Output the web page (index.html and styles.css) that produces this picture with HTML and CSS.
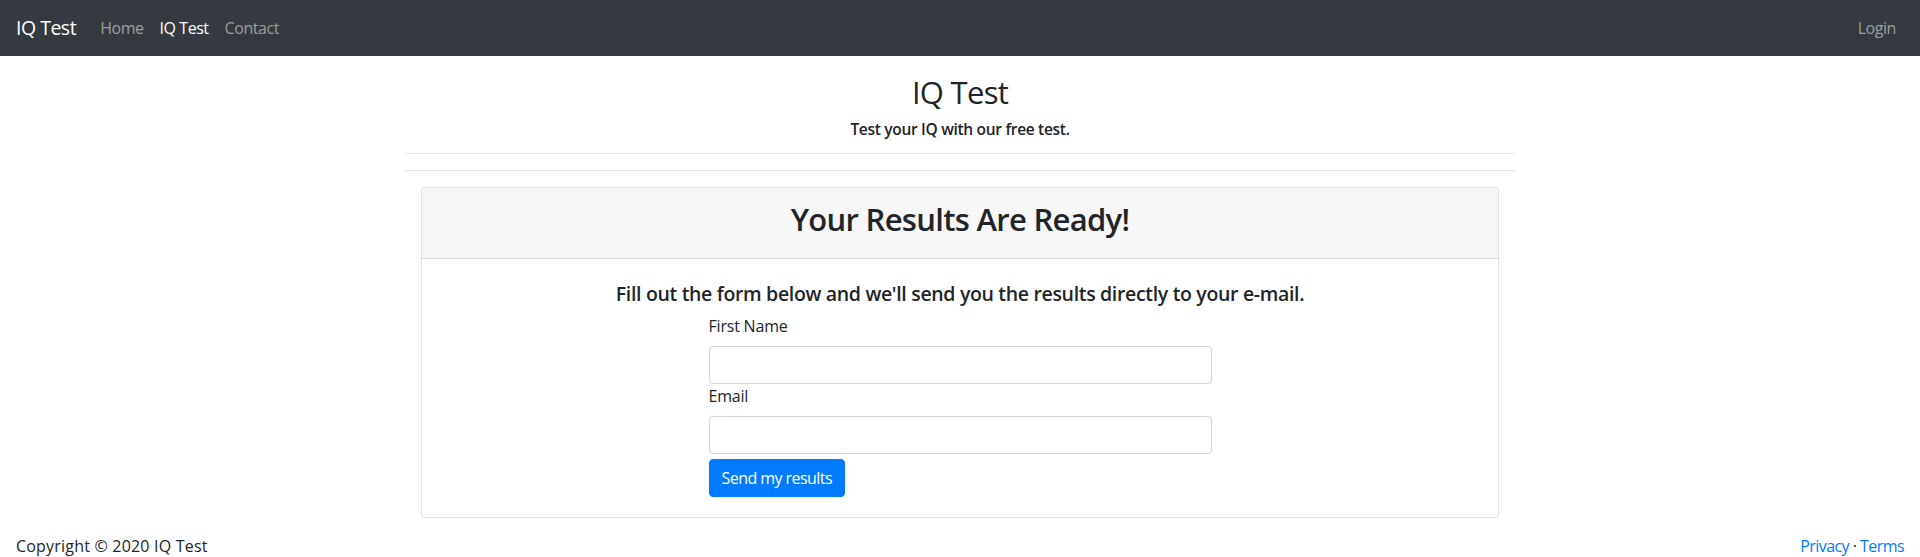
FILE: index.html
```html
<!DOCTYPE html>
<html lang="en">
<head>
<meta charset="utf-8">
<title>IQ Test</title>
<link rel="stylesheet" href="styles.css">
</head>
<body>
<nav class="navbar">
  <a class="brand" href="#">IQ Test</a>
  <ul class="nav-links">
    <li><a class="nav-link" href="#">Home</a></li>
    <li><a class="nav-link active" href="#">IQ Test</a></li>
    <li><a class="nav-link" href="#">Contact</a></li>
  </ul>
  <ul class="nav-links nav-right">
    <li><a class="nav-link" href="#">Login</a></li>
  </ul>
</nav>
<main class="container">
  <header class="page-header">
    <h1 class="page-title">IQ Test</h1>
    <p class="page-subtitle">Test your IQ with our free test.</p>
  </header>
  <hr class="divider">
  <section class="card">
    <div class="card-header">
      <h2 class="card-title">Your Results Are Ready!</h2>
    </div>
    <div class="card-body">
      <h5 class="card-lead">Fill out the form below and we'll send you the results directly to your e-mail.</h5>
      <form class="results-form">
        <label class="form-label" for="firstName">First Name</label>
        <input class="form-control" id="firstName" type="text">
        <label class="form-label" for="email">Email</label>
        <input class="form-control" id="email" type="email">
        <button class="btn-primary" type="button">Send my results</button>
      </form>
    </div>
  </section>
</main>
<footer class="footer">
  <span class="copyright">Copyright © 2020 IQ Test</span>
  <span class="footer-links"><a href="#">Privacy</a> · <a href="#">Terms</a></span>
</footer>
</body>
</html>
```

FILE: styles.css
```css
* { box-sizing: border-box; }
html, body { margin: 0; padding: 0; }
body {
  font-family: "Open Sans", "Noto Sans", sans-serif;
  font-size: 16px;
  line-height: 24px;
  color: #212529;
  background: #fff;
}
a { text-decoration: none; }

.navbar {
  height: 56px;
  background: #343a40;
  display: flex;
  align-items: center;
  padding: 8px 16px;
}
.brand {
  color: #fff;
  font-size: 19.5px;
  letter-spacing: -0.5px;
  line-height: 30px;
  padding: 5px 0;
  margin-right: 16px;
}
.nav-links {
  list-style: none;
  margin: 0;
  padding: 0;
  display: flex;
}
.nav-right { margin-left: auto; }
.nav-link {
  display: block;
  padding: 8px;
  color: rgba(255, 255, 255, 0.5);
  letter-spacing: -0.45px;
}
.nav-link.active { color: #fff; }

.container {
  width: 1110px;
  margin: 0 auto;
}
.page-header {
  text-align: center;
  padding: 17px 0 12px;
  border-bottom: 1px solid rgba(0, 0, 0, 0.1);
}
.page-title {
  margin: 0;
  font-size: 31px;
  letter-spacing: -0.7px;
  line-height: 38px;
  font-weight: 400;
}
.page-subtitle {
  margin: 6px 0 0;
  font-size: 15.5px;
  letter-spacing: -0.3px;
  font-weight: 600;
}
.divider {
  margin: 16px 0;
  border: 0;
  border-top: 1px solid rgba(0, 0, 0, 0.1);
}

.card {
  margin: 0 16px;
  border: 1px solid rgba(0, 0, 0, 0.125);
  border-radius: 4px;
  overflow: hidden;
}
.card-header {
  background: rgba(0, 0, 0, 0.03);
  border-bottom: 1px solid rgba(0, 0, 0, 0.125);
  padding: 12px 20px 20px;
  text-align: center;
}
.card-title {
  margin: 0;
  font-size: 31px;
  letter-spacing: -0.7px;
  line-height: 38px;
  font-weight: 600;
}
.card-body {
  padding: 23px 20px 20px;
}
.card-lead {
  margin: 0 0 8px;
  text-align: center;
  font-size: 19.5px;
  letter-spacing: -0.33px;
  line-height: 24px;
  font-weight: 600;
}
.results-form {
  width: 503px;
  margin: 0 auto;
  display: flex;
  flex-direction: column;
  align-items: flex-start;
}
.form-label {
  display: block;
  margin-bottom: 8px;
  letter-spacing: -0.2px;
}
.form-control {
  width: 100%;
  height: 38px;
  border: 1px solid #ced4da;
  border-radius: 4px;
  padding: 6px 12px;
  font: inherit;
}
.btn-primary {
  margin-top: 5px;
  height: 38px;
  padding: 6px 12px;
  font: inherit;
  letter-spacing: -0.55px;
  color: #fff;
  background: #007bff;
  border: 1px solid #007bff;
  border-radius: 4px;
}

.footer {
  margin-top: 16px;
  padding: 0 16px;
  display: flex;
  justify-content: space-between;
}
.copyright { letter-spacing: 0.2px; }
.footer-links { letter-spacing: -0.55px; }
.footer-links a { color: #007bff; }
```
